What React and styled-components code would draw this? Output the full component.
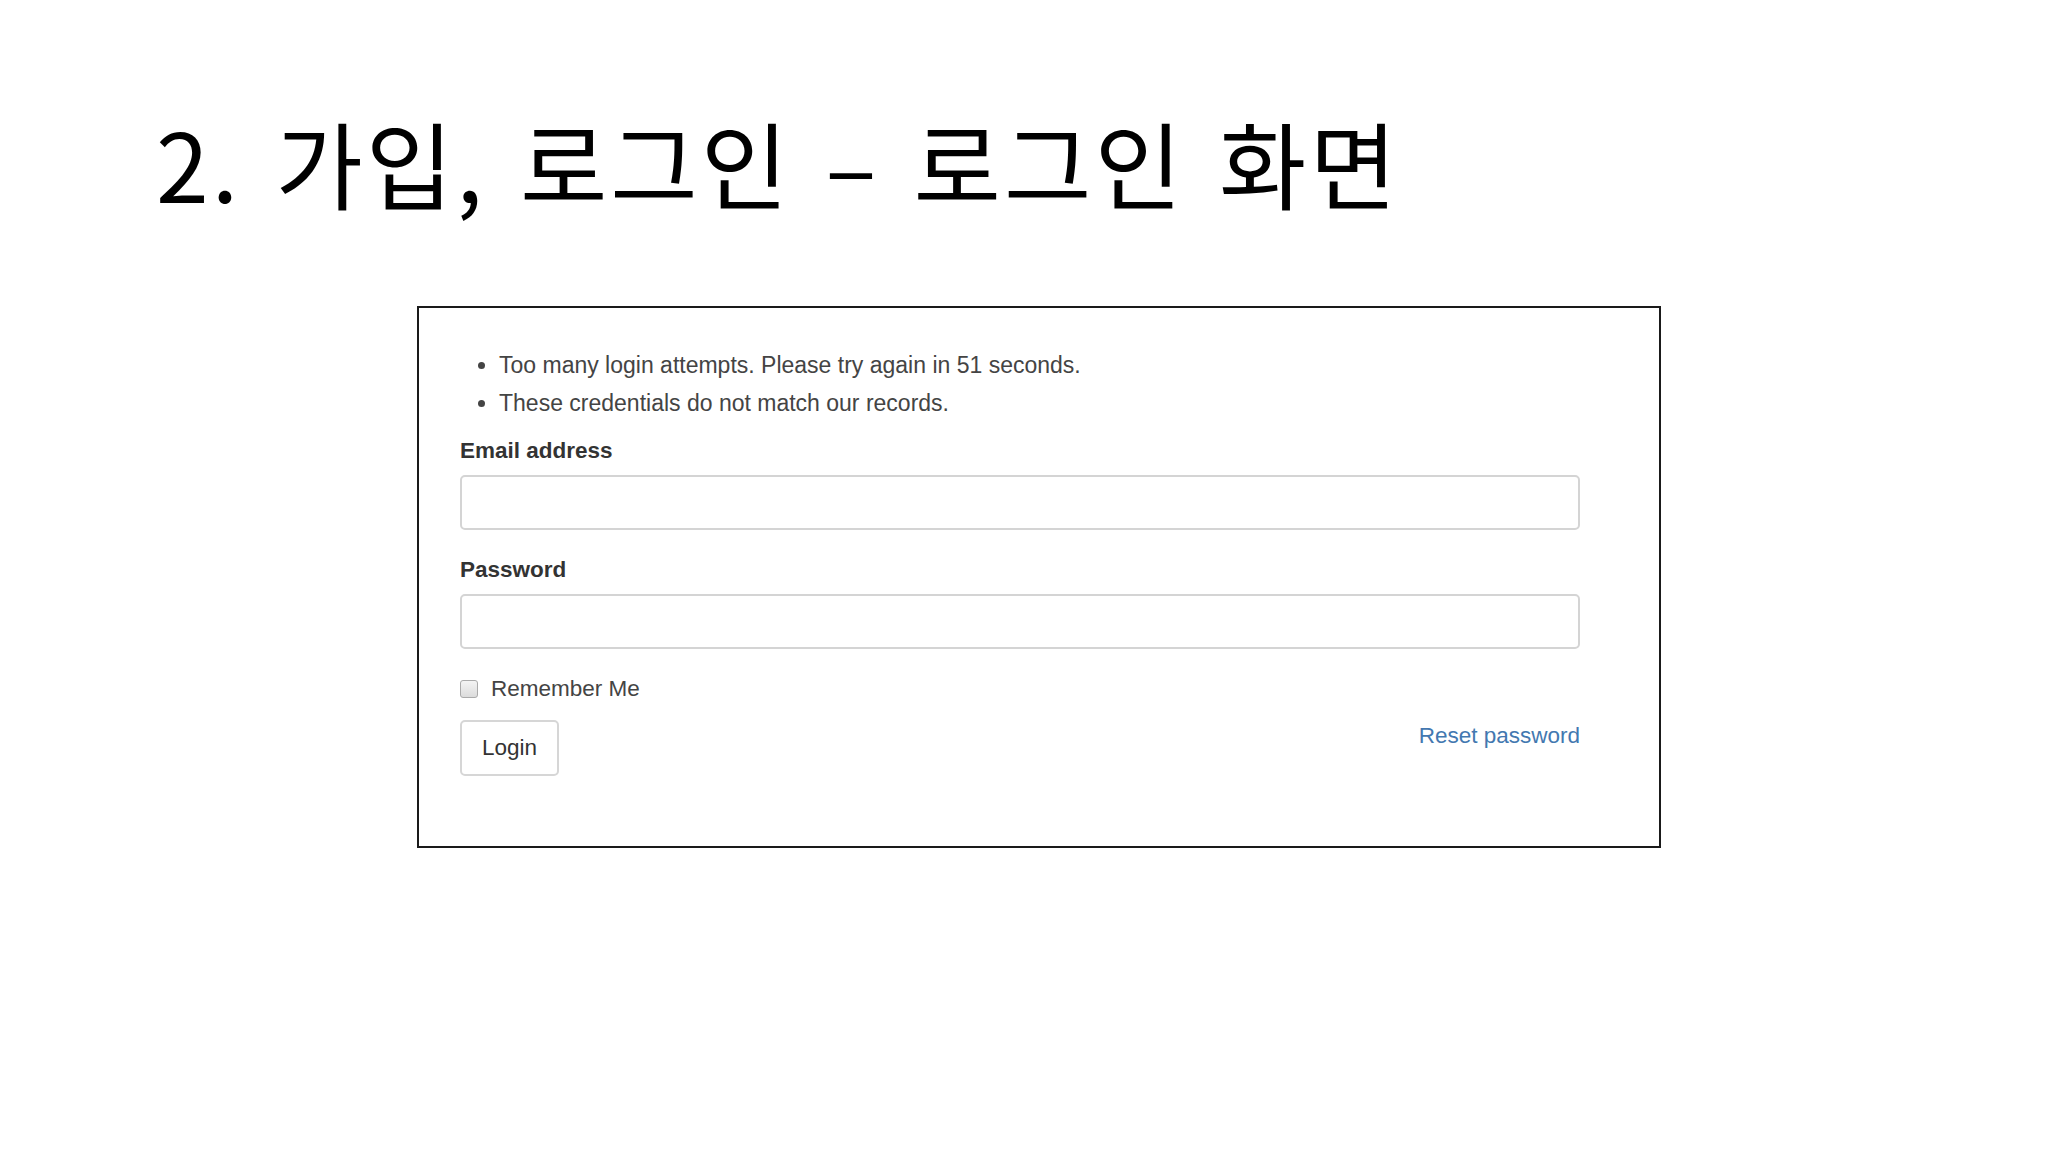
import React from 'react'
import styled, { createGlobalStyle } from 'styled-components'

const GlobalStyle = createGlobalStyle`
  html, body {
    margin: 0;
    padding: 0;
    background: #ffffff;
  }
  body {
    width: 2048px;
    height: 1152px;
    overflow: hidden;
  }
`

const Slide = styled.div`
  width: 2048px;
  height: 1152px;
  box-sizing: border-box;
  padding: 97px 0 0 156px;
`

const Title = styled.h1`
  margin: 0;
  font-family: 'Noto Sans CJK KR', 'Noto Sans', sans-serif;
  font-weight: 400;
  font-size: 95px;
  line-height: 130px;
  color: #000;
  letter-spacing: 3px;
  word-spacing: 10px;
`

const Frame = styled.div`
  margin: 79px 0 0 261px;
  width: 1244px;
  height: 542px;
  box-sizing: border-box;
  border: 2px solid #1a1a1a;
  padding: 38px 0 0 41px;
  font-family: 'Liberation Sans', Arial, sans-serif;
  color: #333;
`

const Errors = styled.ul`
  margin: 0 0 16px;
  padding: 0 0 0 39px;
  font-size: 23px;
  line-height: 38px;
  color: #444;
`

const Form = styled.div`
  width: 1120px;
`

const Label = styled.label`
  display: block;
  font-size: 22.5px;
  font-weight: 700;
  color: #333;
  margin-bottom: 11px;
`

const Field = styled.div`
  margin-bottom: 27px;
`

const Input = styled.input`
  display: block;
  width: 100%;
  height: 55px;
  box-sizing: border-box;
  border: 2px solid #d4d4d4;
  border-radius: 5px;
  background: #fff;
  outline: none;
`

const Check = styled.label`
  display: flex;
  align-items: center;
  gap: 13px;
  font-size: 22.5px;
  color: #444;
  margin-bottom: 18px;
`

const Box = styled.span`
  width: 18px;
  height: 18px;
  box-sizing: border-box;
  border: 1px solid #aaa;
  border-radius: 3px;
  background: linear-gradient(#f4f4f4, #dcdcdc);
`

const Actions = styled.div`
  display: flex;
  justify-content: space-between;
  align-items: flex-start;
`

const Button = styled.button`
  height: 56px;
  padding: 0 20px;
  font-family: 'Liberation Sans', Arial, sans-serif;
  font-size: 22.5px;
  color: #333;
  background: #fff;
  border: 2px solid #d6d6d6;
  border-radius: 5px;
`

const Link = styled.a`
  margin-top: 3px;
  font-size: 22.5px;
  color: #4378b0;
  text-decoration: none;
`

export default function App() {
  return (
    <>
      <GlobalStyle />
      <Slide>
        <Title>2. 가입, 로그인 – 로그인 화면</Title>
        <Frame>
          <Errors>
            <li>Too many login attempts. Please try again in 51 seconds.</li>
            <li>These credentials do not match our records.</li>
          </Errors>
          <Form>
            <Field>
              <Label>Email address</Label>
              <Input type="email" />
            </Field>
            <Field>
              <Label>Password</Label>
              <Input type="password" />
            </Field>
            <Check>
              <Box />
              Remember Me
            </Check>
            <Actions>
              <Button>Login</Button>
              <Link href="#">Reset password</Link>
            </Actions>
          </Form>
        </Frame>
      </Slide>
    </>
  )
}
